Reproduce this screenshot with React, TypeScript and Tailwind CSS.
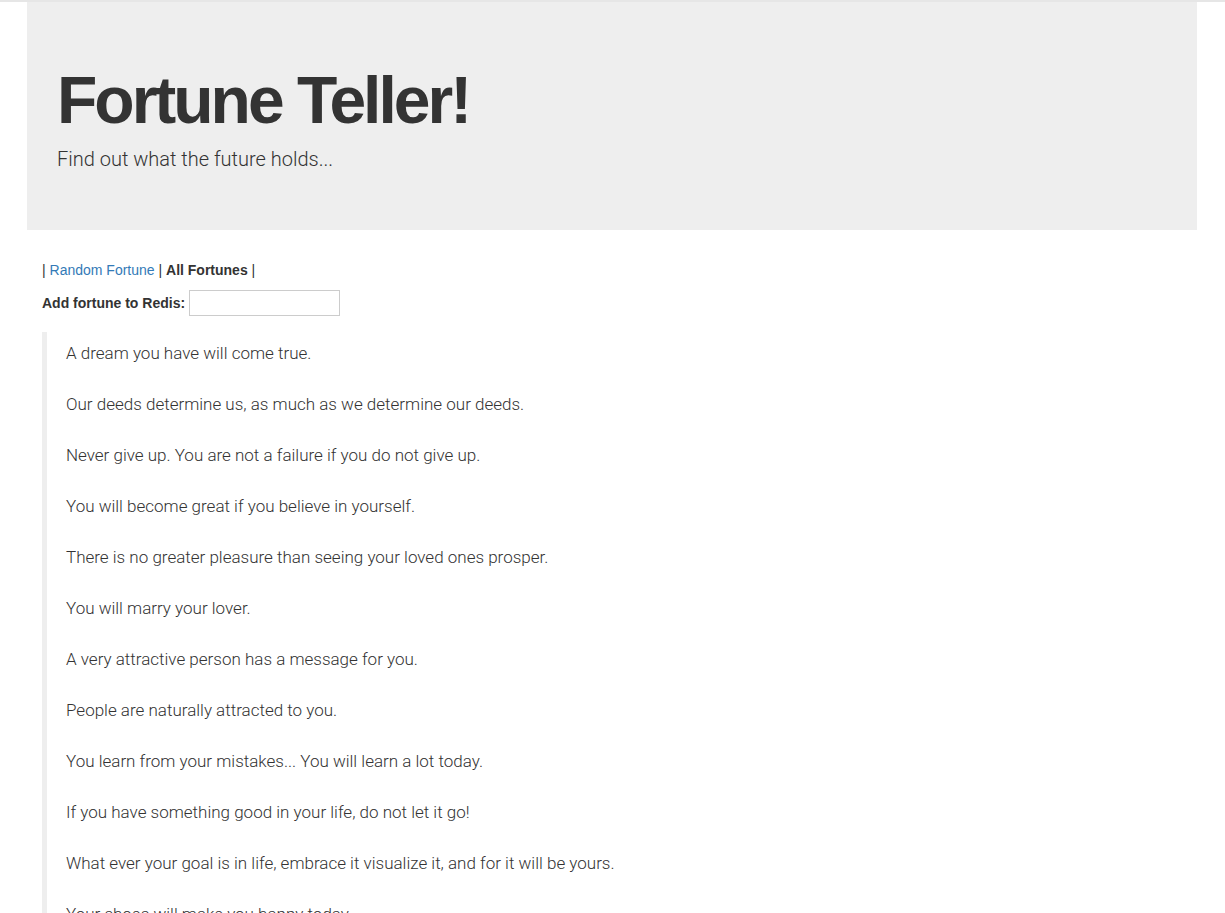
const fortunes = [
  "A dream you have will come true.",
  "Our deeds determine us, as much as we determine our deeds.",
  "Never give up. You are not a failure if you do not give up.",
  "You will become great if you believe in yourself.",
  "There is no greater pleasure than seeing your loved ones prosper.",
  "You will marry your lover.",
  "A very attractive person has a message for you.",
  "People are naturally attracted to you.",
  "You learn from your mistakes... You will learn a lot today.",
  "If you have something good in your life, do not let it go!",
  "What ever your goal is in life, embrace it visualize it, and for it will be yours.",
  "Your shoes will make you happy today.",
];

export default function App() {
  return (
    <div className="min-h-screen bg-white border-t-2 border-[#e6e6e6] text-[#333333] font-['Liberation_Sans',Arial,sans-serif]">
      <div className="w-[1170px] ml-[27px]">
        {/* Jumbotron */}
        <div className="bg-[#eeeeee] h-[228px] pl-[30px] pt-[62px]">
          <h1 className="text-[66px] leading-[72px] font-bold tracking-[-3px]">Fortune Teller!</h1>
          <p className="mt-[8px] text-[20px] leading-[30px] font-light font-['Roboto',sans-serif]">
            Find out what the future holds...
          </p>
        </div>

        <div className="px-[15px] pt-[30px]">
          <div className="text-[14px] leading-[20px] text-[#333333]">
            <span className="text-[#333333]">| </span>
            <a href="#" className="text-[#337ab7]">
              Random Fortune
            </a>
            <span> | </span>
            <b>All Fortunes</b>
            <span> |</span>
          </div>

          <form className="mt-[10px] flex items-center gap-[4px]" onSubmit={(e) => e.preventDefault()}>
            <label className="text-[14px] font-bold">Add fortune to Redis:</label>
            <input type="text" className="w-[151px] h-[26px] border border-[#cccccc] bg-white" />
          </form>

          {/* Fortunes */}
          <blockquote className="mt-[16px] border-l-[5px] border-[#eeeeee] pl-[19px] pt-[9px] font-['Roboto',sans-serif] font-light text-[17px]">
            {fortunes.map((f) => (
              <p key={f} className="leading-[25.5px] mb-[25.5px]">
                {f}
              </p>
            ))}
          </blockquote>
        </div>
      </div>
    </div>
  );
}
